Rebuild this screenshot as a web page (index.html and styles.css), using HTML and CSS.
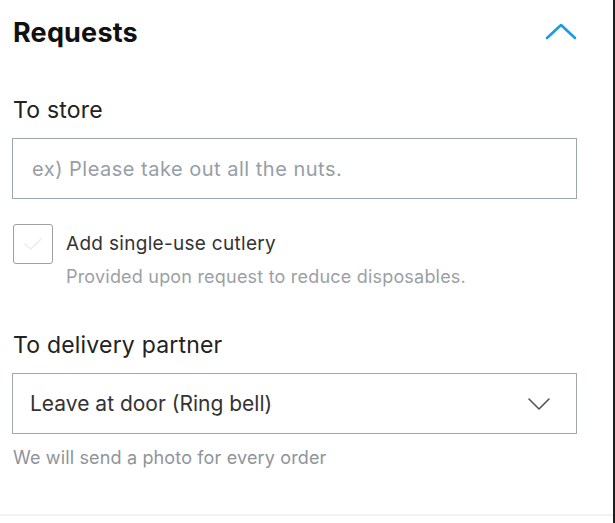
FILE: index.html
```html
<!DOCTYPE html>
<html lang="en">
<head>
<meta charset="utf-8">
<title>Requests</title>
<link rel="stylesheet" href="styles.css">
</head>
<body>
<div class="frame">
  <section class="panel">
    <header class="panel-head">
      <h2 class="title">Requests</h2>
      <svg class="chev-up" width="32" height="18" viewBox="0 0 32 18" aria-hidden="true">
        <path d="M2 16 L16 3 L30 16" fill="none" stroke="#1a9be6" stroke-width="2.6" stroke-linecap="round" stroke-linejoin="round"/>
      </svg>
    </header>

    <div class="group">
      <div class="label">To store</div>
      <div class="field"><span class="placeholder">ex) Please take out all the nuts.</span></div>
      <div class="check-row">
        <div class="checkbox">
          <svg width="20" height="14" viewBox="0 0 20 14" aria-hidden="true">
            <path d="M2 7 L7.5 12 L18 2" fill="none" stroke="#ececec" stroke-width="1.6" stroke-linecap="round" stroke-linejoin="round"/>
          </svg>
        </div>
        <div class="check-text">
          <div class="check-label">Add single-use cutlery</div>
          <div class="hint">Provided upon request to reduce disposables.</div>
        </div>
      </div>
    </div>

    <div class="group group-2">
      <div class="label">To delivery partner</div>
      <div class="field select">
        <span class="value">Leave at door (Ring bell)</span>
        <svg class="chev-down" width="24" height="14" viewBox="0 0 24 14" aria-hidden="true">
          <path d="M2 2 L12 12 L22 2" fill="none" stroke="#555" stroke-width="1.6" stroke-linecap="round" stroke-linejoin="round"/>
        </svg>
      </div>
      <div class="hint hint-2">We will send a photo for every order</div>
    </div>
  </section>
</div>
</body>
</html>
```

FILE: styles.css
```css
html, body {
  margin: 0;
  padding: 0;
  background: #fff;
}
body {
  font-family: Inter, Roboto, "Liberation Sans", Arial, sans-serif;
  color: #222;
}
.frame {
  display: flex;
  height: 523px;
  width: 615px;
  border-right: 2px solid #1e1e1e;
  box-sizing: border-box;
}
.panel {
  flex: 1;
  padding: 0 36px 0 12px;
  border-bottom: 2px solid #f2f2f2;
  height: 516px;
  box-sizing: border-box;
}
.panel-head {
  display: flex;
  justify-content: space-between;
  align-items: center;
  height: 64px;
  padding-left: 1px;
}
.title {
  margin: 0;
  font-size: 27px;
  font-weight: 700;
  color: #111;
  letter-spacing: 0.2px;
}
.chev-up {
  margin-top: -2px;
}
.group {
  padding-top: 31px;
}
.label {
  font-size: 23px;
  letter-spacing: 0.2px;
  color: #222;
  padding-left: 1px;
  line-height: 30px;
}
.field {
  margin-top: 13px;
  height: 61px;
  border: 1.5px solid #9aa6b0;
  box-sizing: border-box;
  display: flex;
  align-items: center;
  padding-left: 19px;
}
.placeholder {
  font-size: 20px;
  letter-spacing: 0.5px;
  color: #979ea5;
}
.check-row {
  display: flex;
  margin-top: 25px;
  gap: 13px;
  padding-left: 1px;
}
.checkbox {
  width: 40px;
  height: 40px;
  border: 1.5px solid #a0a0a0;
  border-radius: 3px;
  box-sizing: border-box;
  display: flex;
  align-items: center;
  justify-content: center;
  flex: none;
}
.check-label {
  font-size: 19px;
  letter-spacing: 0.3px;
  color: #333;
  line-height: 24px;
  margin-top: 8px;
}
.hint {
  font-size: 18px;
  letter-spacing: 0.2px;
  color: #9a9fa5;
  line-height: 22px;
  margin-top: 10px;
}
.group-2 {
  padding-top: 42px;
}
.select {
  justify-content: space-between;
  padding-left: 17px;
  padding-right: 25px;
  border-color: #a3a8ae;
}
.value {
  font-size: 21px;
  color: #333;
}
.hint-2 {
  margin-top: 13px;
  padding-left: 1px;
  letter-spacing: 0.15px;
  color: #8e949a;
}
```
